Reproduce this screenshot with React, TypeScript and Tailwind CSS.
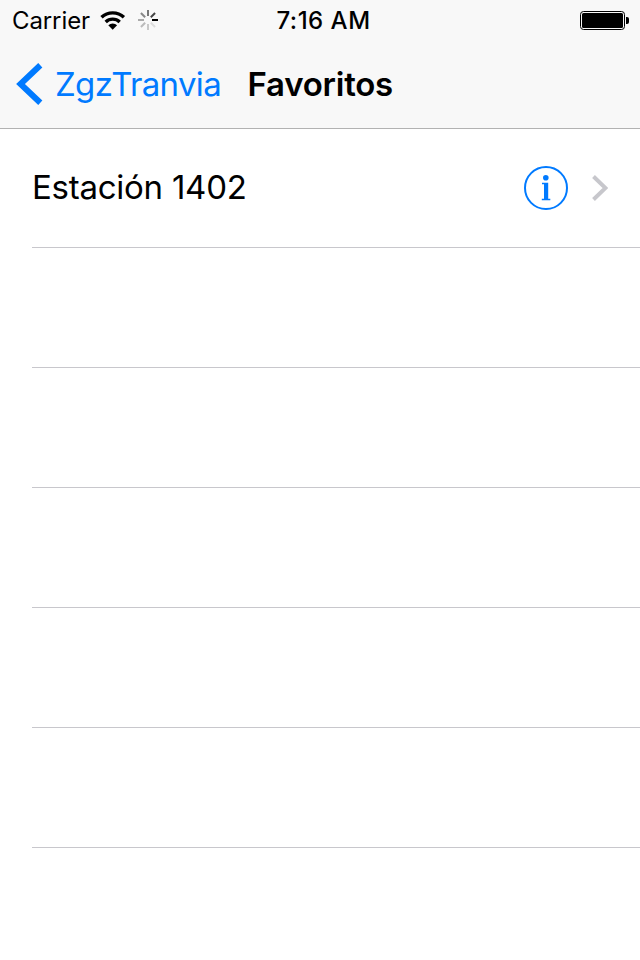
import type { ReactNode } from "react";

const emptyRows = [1, 2, 3, 4, 5];

// clockwise from twelve o'clock
const spokes = ["#777", "#444", "#000", "#ddd", "#c8c8c8", "#bbb", "#aaa", "#888"];

function WifiIcon() {
  return (
    <svg width="26" height="20" viewBox="0 0 26 20" className="shrink-0">
      <g fill="none" stroke="#000" strokeWidth="3.4">
        <path d="M1.500 7.300a16.300 16.300 0 0 1 22.400 0" />
        <path d="M5.700 11.900a10.200 10.200 0 0 1 14 0" />
      </g>
      <path d="M8.300 15.300a6 6 0 0 1 8.800 0L12.700 19.700z" />
    </svg>
  );
}

function Spinner() {
  return (
    <svg width="20" height="20" viewBox="-10 -10 20 20" className="shrink-0">
      {spokes.map((color, i) => (
        <path
          key={i}
          d="M0-10V-4"
          stroke={color}
          strokeWidth="2"
          transform={`rotate(${i * 45})`}
        />
      ))}
    </svg>
  );
}

function BatteryIcon() {
  return (
    <svg width="49" height="19" viewBox="0 0 49 19">
      <rect x="0.5" y="0.5" width="44" height="18" rx="3" fill="none" stroke="#000" />
      <rect x="2" y="2" width="41" height="15" rx="1.5" />
      <path d="M46 6h1a2 2 0 0 1 2 2v3a2 2 0 0 1-2 2h-1z" />
    </svg>
  );
}

function InfoIcon() {
  return (
    <svg width="44" height="44" viewBox="0 0 44 44" fill="#007aff">
      <circle cx="22" cy="22" r="21" fill="none" stroke="#007aff" strokeWidth="2" />
      <circle cx="21.800" cy="11.700" r="2.800" />
      <path d="M18 16.800h6.200v16h2.100v1.400h-8.500v-1.400H20V18.200h-2z" />
    </svg>
  );
}

function Row({ children }: { children?: ReactNode }) {
  return (
    <li className="ml-8 flex h-[120px] items-center border-b border-[#c8c7cc]">
      {children}
    </li>
  );
}

export default function App() {
  return (
    <div className="h-[960px] w-[640px] overflow-hidden bg-white font-['Inter',sans-serif] text-black">
      <header className="h-[129px] border-b border-[#b2b2b2] bg-[#f8f8f8]">
        <div className="grid h-10 grid-cols-3 items-center text-2xl">
          <div className="flex items-center pl-3">
            <span className="w-[88px] pt-0.5 tracking-[-0.1px]">Carrier</span>
            <WifiIcon />
            <span className="ml-3">
              <Spinner />
            </span>
          </div>
          <span className="pt-0.5 pl-[7px] text-center font-medium tracking-[0.5px]">7:16 AM</span>
          <div className="flex justify-end pr-[11px]">
            <BatteryIcon />
          </div>
        </div>
        <nav className="flex h-[88px] items-center text-[33px]">
          <a className="flex items-center pl-4 text-[#007aff]">
            <svg width="27" height="42" viewBox="0 0 27 42" fill="none">
              <path d="M24.300 2.200 4.500 21l19.800 18.800" stroke="#007aff" strokeWidth="6" />
            </svg>
            <span className="ml-3 pt-0.5 tracking-[-0.650px]">ZgzTranvia</span>
          </a>
          <h1 className="ml-[26.500px] pt-0.5 font-semibold tracking-[-0.250px]">Favoritos</h1>
        </nav>
      </header>
      <ul className="-mt-px">
        <Row>
          <span className="flex-1 text-[33px] tracking-[-0.250px]">Estación 1402</span>
          <button className="mr-6" aria-label="Info">
            <InfoIcon />
          </button>
          <svg width="16" height="26" viewBox="0 0 16 26" fill="none" className="mr-8">
            <path d="M1.500 1.500 13.500 13l-12 11.500" stroke="#c7c7cc" strokeWidth="4" />
          </svg>
        </Row>
        {emptyRows.map((row) => (
          <Row key={row} />
        ))}
      </ul>
    </div>
  );
}
